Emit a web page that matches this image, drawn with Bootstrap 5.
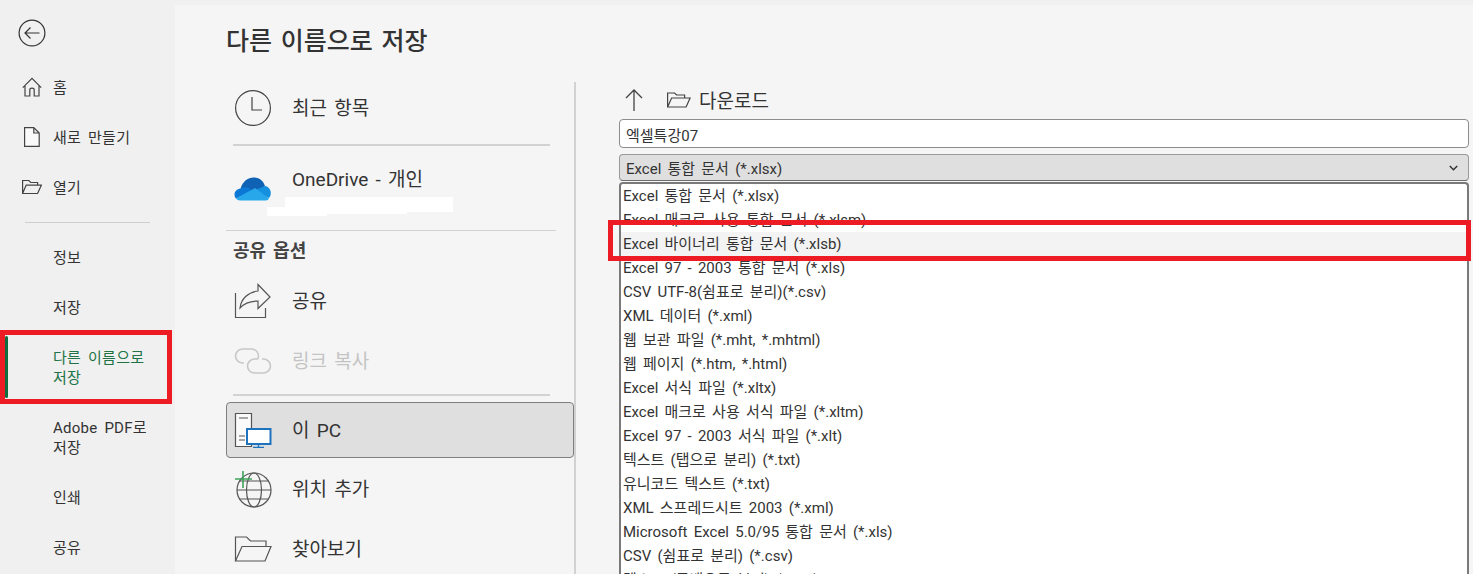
<!DOCTYPE html>
<html lang="ko">
<head>
  <meta charset="UTF-8" />
  <meta name="viewport" content="width=device-width, initial-scale=1.0"/>
  <title>다른 이름으로 저장</title>
  <link href="https://cdn.jsdelivr.net/npm/bootstrap@5.3.2/dist/css/bootstrap.min.css" rel="stylesheet" />
  <style>
    html, body {
      height: 574px;
      overflow: hidden;
    }
    body {
      position: relative;
      background: #f0f0f0;
      color: #333;
      font-family: Roboto, "Noto Sans CJK KR", sans-serif;
      font-size: 15px;
      word-spacing: 2.5px;
    }
    svg { display: block; flex: none; }

    /* left rail */
    .rail { width: 175px; flex: none; letter-spacing: .25px; word-spacing: 3px; }
    .back-btn { margin: 18px 0 15px 18px; height: 29px; }
    .rail-item {
      min-height: 50px;
      padding: 2px 10px 0 53px;
      line-height: 20px;
      color: #333;
      position: relative;
      display: flex;
      align-items: center;
    }
    .rail-item svg { position: absolute; left: 22px; top: 50%; transform: translateY(-50%); }
    .rail-tall { min-height: 70px; }
    .rail-rule { height: 1px; background: #cfcfcf; margin: 10px 25px 9px; }
    .rail-active { color: #217346; }
    .rail-active::before {
      content: "";
      position: absolute;
      left: 5px;
      top: 4px;
      bottom: 4px;
      width: 3px;
      border-radius: 2px;
      background: #0e6c3e;
    }

    /* backstage page */
    .stage {
      margin-top: 5px;
      padding-left: 51px;
      background: #f5f5f5;
      height: 569px;
      min-width: 0;
    }
    .stage-title {
      font-size: 25px;
      font-weight: 500;
      line-height: 34px;
      padding-top: 20px;
      height: 77px;
      margin: 0;
      color: #333;
    }
    .places {
      width: 350px;
      flex: none;
      border-right: 2px solid #d2d2d2;
      height: 492px;
    }
    .place {
      display: flex;
      align-items: center;
      height: 60px;
      padding-left: 8px;
      font-size: 19px;
      color: #333;
    }
    .place-icon { width: 38px; margin-right: 20px; flex: none; }
    .place-text { padding-top: 2px; }
    .place-recent { height: 52px; }
    .place-off { color: #c4c4c4; }
    .place-on {
      height: 56px;
      margin: 6px 0 1px;
      width: 348px;
      background: #dfdfdf;
      border: 1px solid #7f7f7f;
      border-radius: 4px;
      padding-left: 7px;
    }
    .place-rule { height: 2px; background: #d2d2d2; margin: 10px 24px 0 7px; border: 0; opacity: 1; }
    .place-rule-low { margin-top: 3px; }
    .drive-block { height: 84px; padding: 22px 0 0 8px; }
    .drive-cloud { margin-top: 9px; }
    .drive-name { font-size: 19px; line-height: 24px; }
    .drive-mask { margin: 5px 0 0 -25px; }
    .share-rule { height: 1px; background: #d2d2d2; margin-right: 18px; }
    .share-head {
      font-size: 18px;
      font-weight: 700;
      line-height: 40px;
      height: 40px;
      padding-left: 7px;
      color: #444;
    }

    /* file pane */
    .pane {
      position: relative;
      padding: 6px 4px 0 43px;
      min-width: 0;
      height: 492px;
    }
    .path-bar { height: 24px; font-size: 19px; line-height: 24px; margin-bottom: 7px; color: #333; }
    .path-text { padding-top: 3px; }
    .file-name.form-control {
      height: 29px;
      padding: 2px 6px 0;
      font-size: 15px;
      color: #333;
      border: 1px solid #8c8c8c;
      border-radius: 4px;
      background: #fff;
      box-shadow: none;
    }
    .file-type {
      height: 27px;
      margin-top: 6px;
      padding: 0 6px;
      line-height: 25px;
      background: #dfdfdf;
      border: 1px solid #9a9a9a;
      border-bottom-color: #6e6e6e;
      border-radius: 4px;
    }
    .file-type-text { padding-top: 3px; }
    .type-list {
      position: relative;
      z-index: 2;
      margin-top: 1px;
      height: 400px;
      overflow: hidden;
      background: #fff;
      border: 2px solid #7a7a7a;
      border-bottom: 0;
      border-radius: 4px 4px 0 0;
    }
    .type-list .list-group-item {
      height: 24px;
      line-height: 24px;
      padding: 0 0 0 2px;
      border: 0;
      border-radius: 0;
      background: transparent;
      color: #333;
      font-size: 15px;
      white-space: nowrap;
    }
    .type-list .type-hover { background: #f3f3f3; }

    /* annotations on top of the shot */
    .red-box {
      position: absolute;
      z-index: 5;
      border: 5px solid #ed1c24;
      pointer-events: none;
    }
    .red-rail { left: 0; top: 330px; width: 172px; height: 74px; }
    .red-type { left: 608px; top: 220px; width: 863px; height: 41px; }
  </style>
</head>
<body>
  <div class="d-flex">
    <!-- 왼쪽 메뉴 -->
    <nav class="rail d-flex flex-column">
      <div class="back-btn">
        <svg width="29" height="29" viewBox="0 0 29 29" fill="none" stroke="#333" stroke-width="1.2">
          <circle cx="14" cy="15" r="12.9"/>
          <path d="M7 15h14.500M12.500 9.500 7 15l5.500 5.500"/>
        </svg>
      </div>
      <div class="rail-item">
        <svg width="20" height="20" viewBox="0 0 20 20" fill="none" stroke="#444" stroke-width="1.2">
          <path d="M.8 10.600 10 1.400l9.200 9.200M3 9v10h4.800v-6q0-1.800 2.200-1.800t2.200 1.800v6H17V9"/>
        </svg>
        홈
      </div>
      <div class="rail-item">
        <svg width="20" height="20" viewBox="0 0 20 20" fill="none" stroke="#444" stroke-width="1.2">
          <path d="M2.600.6h9.200l5.400 5.400v13.400H2.600zM11.800.6V6h5.400" fill="#fafafa"/>
        </svg>
        새로 만들기
      </div>
      <div class="rail-item">
        <svg width="20" height="15" viewBox="0 0 20 15" fill="none" stroke="#444" stroke-width="1.2">
          <path d="M.6 14V1h6.200l2 2h6.800v2.600M.6 14l3.600-8.400h15.200L15.600 14z"/>
        </svg>
        열기
      </div>
      <div class="rail-rule"></div>
      <div class="rail-item">정보</div>
      <div class="rail-item">저장</div>
      <div class="rail-item rail-tall rail-active">다른 이름으로<br>저장</div>
      <div class="rail-item rail-tall">Adobe PDF로<br>저장</div>
      <div class="rail-item">인쇄</div>
      <div class="rail-item">공유</div>
    </nav>

    <main class="stage flex-grow-1">
      <h1 class="stage-title">다른 이름으로 저장</h1>
      <div class="d-flex">
        <!-- 위치 목록 -->
        <section class="places">
          <div class="place place-recent">
            <span class="place-icon">
              <svg width="38" height="36" viewBox="0 0 38 36" fill="none" stroke="#444" stroke-width="1.2">
                <circle cx="19" cy="18" r="17.400"/>
                <path d="M18 7v13h10"/>
              </svg>
            </span>
            <span class="place-text">최근 항목</span>
          </div>
          <hr class="place-rule">
          <div class="drive-block d-flex">
            <span class="place-icon drive-cloud">
              <svg width="38" height="24" viewBox="0 0 38 24">
                <path d="M6.500 11.500C9 4 14 .5 19.500.5 26 .5 29.500 4.500 31 9l-9 7z" fill="#0f62b4"/>
                <path d="M6.500 11.500C3 12 .5 14.500.5 17.500c0 1.500.5 3 1.500 4l16-7.500-3-3c-3-1-6-.8-8.500.5z" fill="#0a78d4"/>
                <path d="M31 9c3.500.5 5.800 3.500 5.800 7 0 2-.7 3.800-1.800 5l-16-7z" fill="#1490df"/>
                <path d="M2 21.500c1 1.300 2.500 2 4 2h26c1.300 0 2.300-.7 3-2L21 11z" fill="#28a8ea"/>
              </svg>
            </span>
            <div>
              <div class="drive-name">OneDrive - 개인</div>
              <svg class="drive-mask" width="186" height="19" viewBox="0 0 186 19" fill="#fff">
                <path d="M18 0H186V15H140V17H60V19H0V10H18z"/>
              </svg>
            </div>
          </div>
          <div class="share-rule"></div>
          <div class="share-head">공유 옵션</div>
          <div class="place">
            <span class="place-icon">
              <svg width="38" height="36" viewBox="0 0 38 36" fill="none" stroke="#555" stroke-width="1.2">
                <path d="M1.500 10v24.500h30V25"/>
                <path d="M24 1.500 36 14 24 25.500v-7.500c-9 0-14 2.500-18 7 1-9 8-16 18-17z"/>
              </svg>
            </span>
            <span class="place-text">공유</span>
          </div>
          <div class="place place-off">
            <span class="place-icon">
              <svg width="38" height="28" viewBox="0 0 38 28" fill="none" stroke="#c8c8c8" stroke-width="1.600">
                <path d="M10 16H9C4.500 16 1.500 12.800 1.500 9S4.500 2 9 2h8c4.500 0 7.500 3 7.500 7 0 1-.3 2-.8 3"/>
                <path d="M28 12h1c4.500 0 7.500 3.200 7.500 7s-3 7-7.500 7h-8c-4.500 0-7.500-3-7.500-7 0-3.500 3-7 7.500-7h3"/>
              </svg>
            </span>
            <span class="place-text">링크 복사</span>
          </div>
          <hr class="place-rule place-rule-low">
          <div class="place place-on">
            <span class="place-icon">
              <svg width="38" height="36" viewBox="0 0 38 36" fill="none">
                <path d="M1.500 1.500h16v33h-16z" fill="#fafafa" stroke="#555" stroke-width="1.200"/>
                <path d="M5 6h9M5 24h6M5 28h6" stroke="#555" stroke-width="1.200"/>
                <path d="M13 17h23.500v15H13z" fill="#fff" stroke="#1e73be" stroke-width="2"/>
                <path d="M24.500 32v3M19 35.500h11" stroke="#1e73be" stroke-width="1.400"/>
              </svg>
            </span>
            <span class="place-text">이 PC</span>
          </div>
          <div class="place">
            <span class="place-icon">
              <svg width="38" height="38" viewBox="0 0 38 38" fill="none" stroke="#555" stroke-width="1.200">
                <circle cx="20" cy="20" r="17"/>
                <ellipse cx="20" cy="20" rx="7.500" ry="17"/>
                <path d="M3 20h34M5.500 11h29M5.500 29h29"/>
                <path d="M9 1v17M1 9h17" stroke="#3fa45b" stroke-width="1.600"/>
              </svg>
            </span>
            <span class="place-text">위치 추가</span>
          </div>
          <div class="place">
            <span class="place-icon">
              <svg width="38" height="26" viewBox="0 0 38 26" fill="none" stroke="#555" stroke-width="1.200">
                <path d="M1.500 25V1h11l4 4h15.500v5.500"/>
                <path d="M1.500 25 8 10.500h29L31 25z"/>
              </svg>
            </span>
            <span class="place-text">찾아보기</span>
          </div>
        </section>

        <!-- 파일 영역 -->
        <section class="pane flex-grow-1">
          <div class="path-bar d-flex align-items-center">
            <svg class="me-3" width="32" height="24" viewBox="0 0 32 24" fill="none" stroke="#444" stroke-width="1.300">
              <path d="M8 23V2M0 10l8-8 8 8" transform="translate(7)"/>
            </svg>
            <svg class="me-2" width="24" height="16" viewBox="0 0 24 16" fill="none" stroke="#444" stroke-width="1.200">
              <path d="M.6 15V1h7l2 2h8v3M.6 15l4-9h18.500l-4 9z"/>
            </svg>
            <span class="path-text">다운로드</span>
          </div>
          <input class="file-name form-control" type="text" value="엑셀특강07" />
          <div class="file-type d-flex justify-content-between align-items-center">
            <span class="file-type-text">Excel 통합 문서 (*.xlsx)</span>
            <svg class="me-1" width="9" height="6" viewBox="0 0 9 6" fill="none" stroke="#333" stroke-width="1.500">
              <path d="M.8 1 4.500 4.700 8.200 1"/>
            </svg>
          </div>
          <div class="type-list">
            <ul class="list-group">
              <li class="list-group-item">Excel 통합 문서 (*.xlsx)</li>
              <li class="list-group-item">Excel 매크로 사용 통합 문서 (*.xlsm)</li>
              <li class="list-group-item type-hover">Excel 바이너리 통합 문서 (*.xlsb)</li>
              <li class="list-group-item">Excel 97 - 2003 통합 문서 (*.xls)</li>
              <li class="list-group-item">CSV UTF-8(쉼표로 분리)(*.csv)</li>
              <li class="list-group-item">XML 데이터 (*.xml)</li>
              <li class="list-group-item">웹 보관 파일 (*.mht, *.mhtml)</li>
              <li class="list-group-item">웹 페이지 (*.htm, *.html)</li>
              <li class="list-group-item">Excel 서식 파일 (*.xltx)</li>
              <li class="list-group-item">Excel 매크로 사용 서식 파일 (*.xltm)</li>
              <li class="list-group-item">Excel 97 - 2003 서식 파일 (*.xlt)</li>
              <li class="list-group-item">텍스트 (탭으로 분리) (*.txt)</li>
              <li class="list-group-item">유니코드 텍스트 (*.txt)</li>
              <li class="list-group-item">XML 스프레드시트 2003 (*.xml)</li>
              <li class="list-group-item">Microsoft Excel 5.0/95 통합 문서 (*.xls)</li>
              <li class="list-group-item">CSV (쉼표로 분리) (*.csv)</li>
              <li class="list-group-item">텍스트 (공백으로 분리) (*.prn)</li>
            </ul>
          </div>
        </section>
      </div>
    </main>
  </div>

  <div class="red-box red-rail"></div>
  <div class="red-box red-type"></div>

  <script src="https://cdn.jsdelivr.net/npm/bootstrap@5.3.2/dist/js/bootstrap.bundle.min.js"></script>
</body>
</html>
